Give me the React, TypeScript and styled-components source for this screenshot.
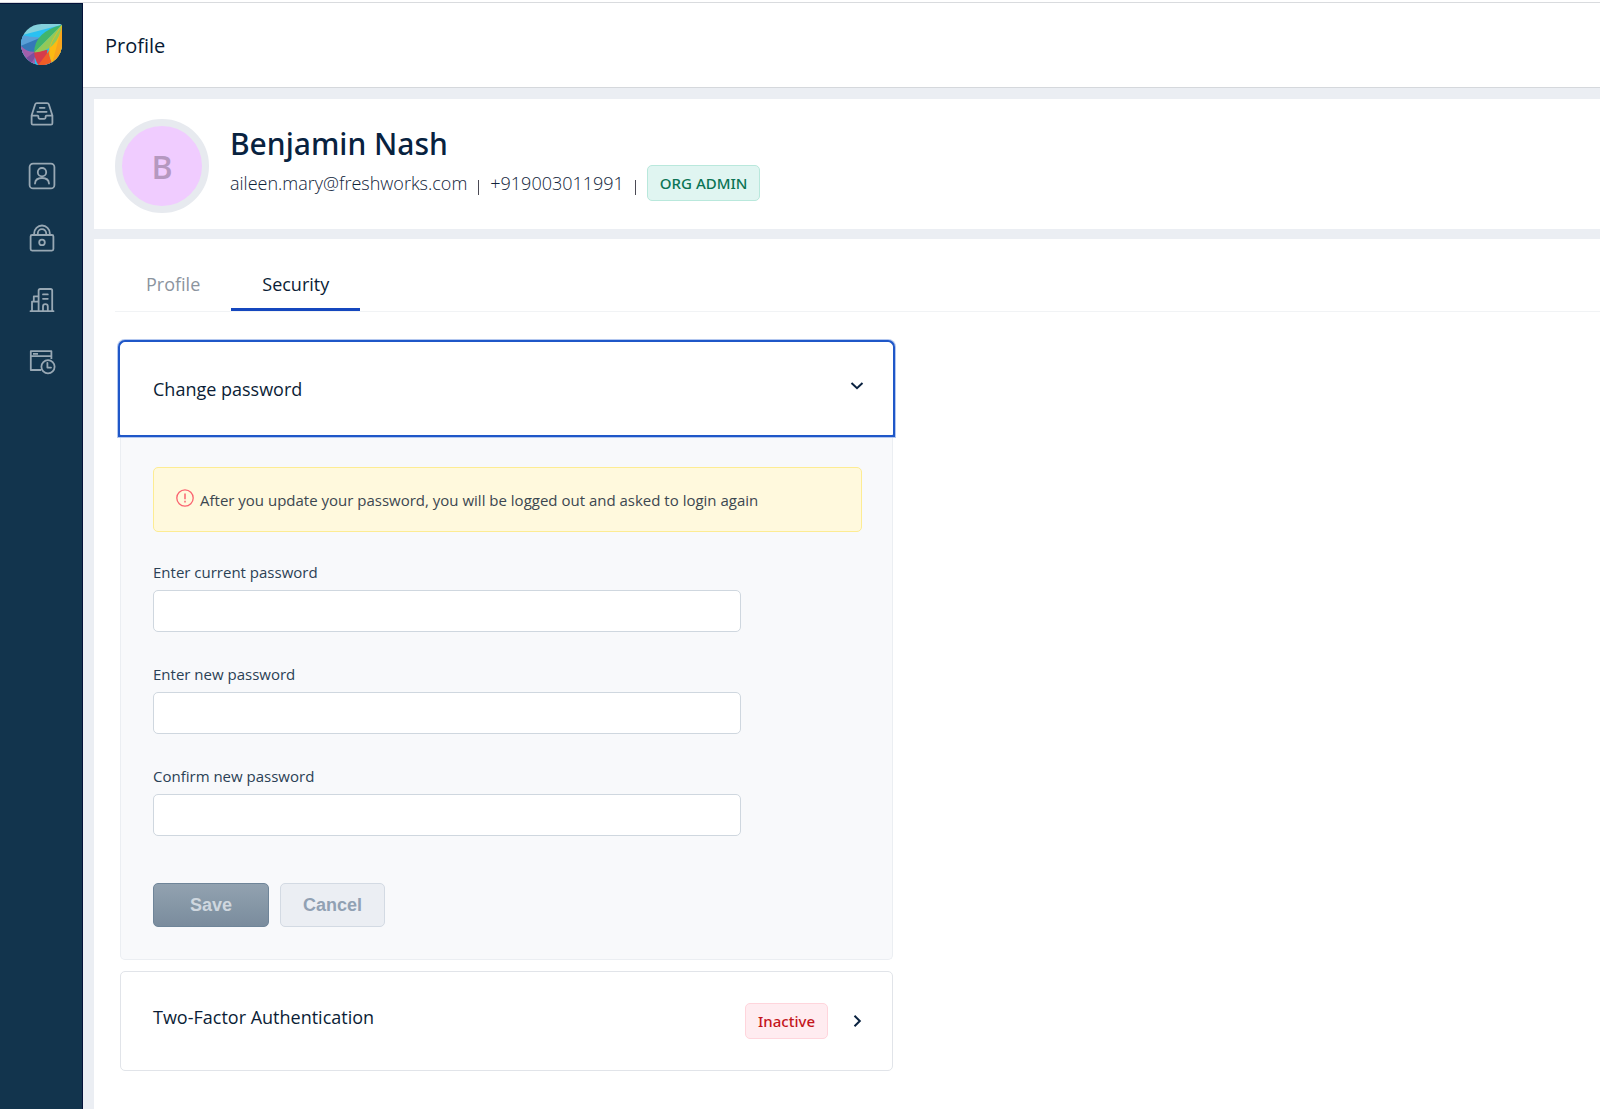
import React, { useState } from "react";
import styled, { createGlobalStyle, css } from "styled-components";

const GlobalStyle = createGlobalStyle`
  *, *::before, *::after { box-sizing: border-box; }
  body {
    margin: 0;
    background: #ebeef3;
    color: #12344d;
    font-family: "Open Sans", "Noto Sans", sans-serif;
  }
`;

const Shell = styled.div`
  display: flex;
  min-height: 100vh;
  padding-top: 3px;
  background: linear-gradient(#fff 0 2px, #d9dbde 2px 3px, #ebeef3 3px);
`;

const Sidebar = styled.nav`
  flex: 0 0 83px;
  display: flex;
  flex-direction: column;
  align-items: center;
  gap: 32px;
  padding: 20px 0 0 1px;
  background: #12344d;
  border-top: 1px solid #04123a;
  border-right: 1px solid #04123a;
`;

const SideLink = styled.a`
  display: flex;
  width: 30px;
  height: 30px;
  align-items: center;
  justify-content: center;
  color: #98a8b4;
`;

const LogoLink = styled.a`
  display: flex;
  height: 43px;
`;

const Main = styled.div`
  flex: 1;
  min-width: 0;
  display: flex;
  flex-direction: column;
`;

const Header = styled.header`
  display: flex;
  align-items: center;
  height: 85px;
  padding: 2px 22px 0;
  background: #fff;
  border-bottom: 1px solid #d5d8dc;
`;

const HeaderTitle = styled.h1`
  margin: 0;
  font-size: 20px;
  line-height: 28px;
  font-weight: 400;
  color: #071a33;
`;

const Content = styled.main`
  flex: 1;
  display: flex;
  flex-direction: column;
  gap: 10px;
  padding: 11px 0 0 11px;
`;

const ProfileCard = styled.section`
  display: flex;
  align-items: flex-start;
  gap: 21px;
  padding: 20px 21px 16px;
  background: #fff;
`;

const Avatar = styled.div`
  flex: none;
  display: flex;
  align-items: center;
  justify-content: center;
  width: 94px;
  height: 94px;
  border: 7px solid #e7eaef;
  border-radius: 50%;
  background: #f0ccff;
  color: #b598c0;
  font-size: 32px;
  font-weight: 600;
`;

const Identity = styled.div`
  padding-top: 4px;
`;

const Name = styled.h2`
  margin: 0;
  font-family: "Noto Sans", "Open Sans", sans-serif;
  font-size: 30px;
  line-height: 42px;
  font-weight: 500;
  color: #08223f;
`;

const Contact = styled.div`
  display: flex;
  align-items: center;
  gap: 11px;
  font-size: 18px;
  line-height: 28px;
  font-weight: 300;
  color: #10233a;
`;

const Divider = styled.span`
  width: 1px;
  height: 15px;
  margin-top: 8px;
  background: #4b4a55;
`;

const Badge = styled.span<{ $tone: "green" | "red" }>`
  display: inline-flex;
  align-items: center;
  justify-content: center;
  height: 36px;
  padding: 0 12px;
  border: 1px solid;
  border-radius: 5px;
  font-family: "Noto Sans", "Open Sans", sans-serif;
  font-size: 15px;
  line-height: 20px;
  font-weight: 500;
  ${(p) =>
    p.$tone === "green"
      ? css`
          color: #0b7455;
          background: #e0f5f1;
          border-color: #b9e8dc;
        `
      : css`
          color: #c4161c;
          background: #ffecf0;
          border-color: #ffd5dc;
        `}
`;

const Panel = styled.section`
  flex: 1;
  padding: 20px 0 38px 21px;
  background: #fff;
`;

const Tabs = styled.div`
  display: flex;
  border-bottom: 1px solid #f1f3f5;
`;

const Tab = styled.button<{ $active: boolean }>`
  height: 52px;
  padding: 0 31px;
  border: 0;
  border-bottom: 3px solid ${(p) => (p.$active ? "#1547be" : "transparent")};
  background: none;
  font: 400 18px/28px "Open Sans", "Noto Sans", sans-serif;
  color: ${(p) => (p.$active ? "#0b1d36" : "#8b949e")};
`;

const Accordion = styled.div`
  display: flex;
  flex-direction: column;
  gap: 11px;
  max-width: 778px;
  padding: 30px 0 0 5px;
`;

const Item = styled.div`
  display: flex;
  flex-direction: column;
`;

const ItemHeader = styled.button<{ $open: boolean }>`
  display: flex;
  align-items: flex-start;
  gap: 22px;
  height: ${(p) => (p.$open ? 93 : 100)}px;
  padding: ${(p) => (p.$open ? 32 : 31)}px 28px 0 32px;
  border: 1px solid ${(p) => (p.$open ? "#fff" : "#e1e4e9")};
  border-radius: ${(p) => (p.$open ? "5px 5px 0 0" : "5px")};
  background: #fff;
  color: #0b1d36;
  font: 400 18px/28px "Open Sans", "Noto Sans", sans-serif;
  text-align: left;
  ${(p) =>
    p.$open &&
    css`
      position: relative;
      z-index: 1;
      box-shadow: 0 0 0 2px #1f57c8, 0 0 0 3px #b3c7ef;
    `}
`;

const ItemTitle = styled.span`
  flex: 1;
`;

const ChevronSlot = styled.span<{ $open: boolean }>`
  display: flex;
  align-items: center;
  height: ${(p) => (p.$open ? 22 : 36)}px;
`;

const ItemBody = styled.form`
  display: flex;
  flex-direction: column;
  padding: 32px 30px 32px 32px;
  border: 1px solid #ebeef2;
  border-top: 0;
  border-radius: 0 0 5px 5px;
  background: #f8f9fb;
`;

const Alert = styled.div`
  display: flex;
  align-items: center;
  gap: 6px;
  height: 65px;
  margin-bottom: 29px;
  padding: 0 22px;
  border: 1px solid #fdec93;
  border-radius: 5px;
  background: #fff9dd;
  color: #3c4750;
  font-size: 15px;
  line-height: 20px;

  svg {
    margin-bottom: 4px;
  }
`;

const Field = styled.div`
  display: flex;
  flex-direction: column;
  gap: 6px;
  max-width: 588px;
  margin-bottom: 31px;
`;

const Label = styled.label`
  font-size: 15px;
  line-height: 23px;
  font-weight: 500;
  color: #2b4155;
`;

const Input = styled.input`
  height: 42px;
  padding: 0 12px;
  border: 1px solid #cfd7df;
  border-radius: 5px;
  background: #fff;
  font: 400 16px/24px "Open Sans", "Noto Sans", sans-serif;
  color: #12344d;
`;

const Actions = styled.div`
  display: flex;
  gap: 11px;
  padding-top: 16px;
`;

const Button = styled.button<{ $primary?: boolean }>`
  height: 44px;
  padding: 0 ${(p) => (p.$primary ? 36 : 22)}px;
  border: 1px solid ${(p) => (p.$primary ? "#6f8599" : "#d3dae3")};
  border-radius: 5px;
  background: ${(p) => (p.$primary ? "linear-gradient(#92a2b0, #7a8c9d)" : "#ebeef3")};
  color: ${(p) => (p.$primary ? "#cfd7df" : "#91a1b3")};
  font: 700 18px/24px "Liberation Sans", Arial, sans-serif;
`;

const Stroke = ({ size = 28, children }: { size?: number; children: React.ReactNode }) => (
  <svg width={size} height={size} viewBox="0 0 28 28" fill="none" stroke="currentColor" strokeWidth="1.8" strokeLinecap="round" strokeLinejoin="round" aria-hidden="true">
    {children}
  </svg>
);

const Logo = () => (
  <svg width="41" height="41" viewBox="0 0 124 124" aria-hidden="true">
    <defs>
      <clipPath id="drop">
        <path d="M62 0H117Q124 0 124 7V62A62 62 0 1 1 62 0Z" />
      </clipPath>
    </defs>
    <g clipPath="url(#drop)">
      <rect width="124" height="124" fill="#83d0dc" />
      <path d="M124 2L10 32L0 42V124H124Z" fill="#29c1f2" />
      <path d="M6 34Q34 42 62 40L40 86L0 90V36Z" fill="#5aa0d8" />
      <path d="M0 66L64 39L42 86Q14 84 0 70Z" fill="#3478b8" />
      <path d="M0 66Q16 86 42 84V124H0Z" fill="#a15fac" />
      <path d="M42 84L14 104L32 118L44 96Z" fill="#7c4f9f" />
      <path d="M40 84Q40 104 52 124H74L80 78Z" fill="#d53b4c" />
      <path d="M92 72L52 124H96L86 96Z" fill="#f05d27" />
      <path d="M124 4Q82 62 86 90Q88 104 96 120H124Z" fill="#fdba12" />
      <path d="M124 4Q108 70 94 118L124 124Z" fill="#f9a51c" />
      <path d="M124 2Q40 24 40 86Z" fill="#41b56c" />
      <path d="M124 2Q112 82 40 86Z" fill="#93c958" />
      <path d="M124 4Q84 60 85 84Q88 106 96 120" fill="none" stroke="#fdba12" strokeWidth="2" />
    </g>
  </svg>
);

const InboxIcon = () => (
  <Stroke>
    <path d="M3.6 15.6V23.2Q3.6 24.6 5 24.6H23Q24.4 24.6 24.4 23.2V15.6L20.8 4.2Q20.4 3.1 19.2 3.1H8.8Q7.6 3.1 7.2 4.2L3.6 15.6H9.5Q10.4 15.6 10.4 16.6V17.6Q10.4 18.8 11.6 18.8H16.4Q17.6 18.8 17.6 17.6V16.6Q17.6 15.6 18.5 15.6H24.4M11.8 7.8H16.6M9.4 11.8H18.6" />
  </Stroke>
);

const ContactIcon = () => (
  <Stroke>
    <rect x="1.6" y="1.6" width="24.8" height="24.8" rx="3.5" />
    <circle cx="14" cy="10.2" r="4.2" />
    <path d="M7 21.5Q7.4 16 14 16T21 21.5" />
  </Stroke>
);

const LockIcon = () => (
  <Stroke>
    <rect x="2.6" y="11" width="22.8" height="15.6" rx="1.5" />
    <path d="M6.2 11V9.3A7.8 7.8 0 0 1 21.8 9.3V11M9.8 11V9.3A4.2 4.2 0 0 1 18.2 9.3V11" />
    <circle cx="14" cy="18.4" r="2.8" />
  </Stroke>
);

const BuildingIcon = () => (
  <Stroke>
    <path d="M2.5 25.2H25.5M10.6 25V4.6Q10.6 3 12.2 3H22.6Q24.2 3 24.2 4.6V25M4 25V15.6H9.6M5.8 15.6V10.4H10M15 8.4H19.8M15 12.8H19.8M15 25V20.4Q15 18.2 17.4 18.2T19.8 20.4V25" />
  </Stroke>
);

const HistoryIcon = () => (
  <Stroke>
    <path d="M13 22H2.8V3.2H23.4V11M2.8 8.2H23.4M5 5.8H10" strokeLinecap="butt" />
    <circle cx="20" cy="18.8" r="6.6" />
    <path d="M19.4 14.8V19.6H23" />
  </Stroke>
);

const AlertIcon = () => (
  <svg width="18" height="18" viewBox="0 0 18 18" fill="none" stroke="#fa6470" aria-hidden="true">
    <circle cx="9" cy="9" r="8.2" strokeWidth="1.3" />
    <path d="M9 4.6V10.2M9 11.8V13.4" strokeWidth="1.5" />
  </svg>
);

const Chevron = ({ down }: { down?: boolean }) => (
  <svg width="14" height="14" viewBox="0 0 14 14" fill="none" stroke="#0a2240" strokeWidth="2" aria-hidden="true">
    <path d={down ? "M1.5 4L7 9.2L12.5 4" : "M4.5 1.8L9.8 7L4.5 12.2"} />
  </svg>
);

const navItems = [
  { label: "Inbox", icon: <InboxIcon /> },
  { label: "Contacts", icon: <ContactIcon /> },
  { label: "Security", icon: <LockIcon /> },
  { label: "Organization", icon: <BuildingIcon /> },
  { label: "Audit log", icon: <HistoryIcon /> },
];

const fields = [
  { id: "current", label: "Enter current password" },
  { id: "new", label: "Enter new password" },
  { id: "confirm", label: "Confirm new password" },
];

export default function App() {
  const [tab, setTab] = useState("Security");
  return (
    <>
      <GlobalStyle />
      <Shell>
        <Sidebar aria-label="Main">
          <LogoLink href="#" aria-label="Home">
            <Logo />
          </LogoLink>
          {navItems.map((item) => (
            <SideLink key={item.label} href="#" aria-label={item.label}>
              {item.icon}
            </SideLink>
          ))}
        </Sidebar>
        <Main>
          <Header>
            <HeaderTitle>Profile</HeaderTitle>
          </Header>
          <Content>
            <ProfileCard>
              <Avatar>B</Avatar>
              <Identity>
                <Name>Benjamin Nash</Name>
                <Contact>
                  <span>aileen.mary@freshworks.com</span>
                  <Divider />
                  <span>+919003011991</span>
                  <Divider />
                  <Badge $tone="green">ORG ADMIN</Badge>
                </Contact>
              </Identity>
            </ProfileCard>
            <Panel>
              <Tabs role="tablist">
                {["Profile", "Security"].map((name) => (
                  <Tab key={name} role="tab" aria-selected={tab === name} $active={tab === name} onClick={() => setTab(name)}>
                    {name}
                  </Tab>
                ))}
              </Tabs>
              <Accordion>
                <Item>
                  <ItemHeader $open aria-expanded="true">
                    <ItemTitle>Change password</ItemTitle>
                    <ChevronSlot $open>
                      <Chevron down />
                    </ChevronSlot>
                  </ItemHeader>
                  <ItemBody onSubmit={(e) => e.preventDefault()}>
                    <Alert role="note">
                      <AlertIcon />
                      <span>After you update your password, you will be logged out and asked to login again</span>
                    </Alert>
                    {fields.map((f) => (
                      <Field key={f.id}>
                        <Label htmlFor={f.id}>{f.label}</Label>
                        <Input id={f.id} type="password" />
                      </Field>
                    ))}
                    <Actions>
                      <Button $primary type="submit" disabled>
                        Save
                      </Button>
                      <Button type="button" disabled>
                        Cancel
                      </Button>
                    </Actions>
                  </ItemBody>
                </Item>
                <Item>
                  <ItemHeader $open={false} aria-expanded="false">
                    <ItemTitle>Two-Factor Authentication</ItemTitle>
                    <Badge $tone="red">Inactive</Badge>
                    <ChevronSlot $open={false}>
                      <Chevron />
                    </ChevronSlot>
                  </ItemHeader>
                </Item>
              </Accordion>
            </Panel>
          </Content>
        </Main>
      </Shell>
    </>
  );
}
